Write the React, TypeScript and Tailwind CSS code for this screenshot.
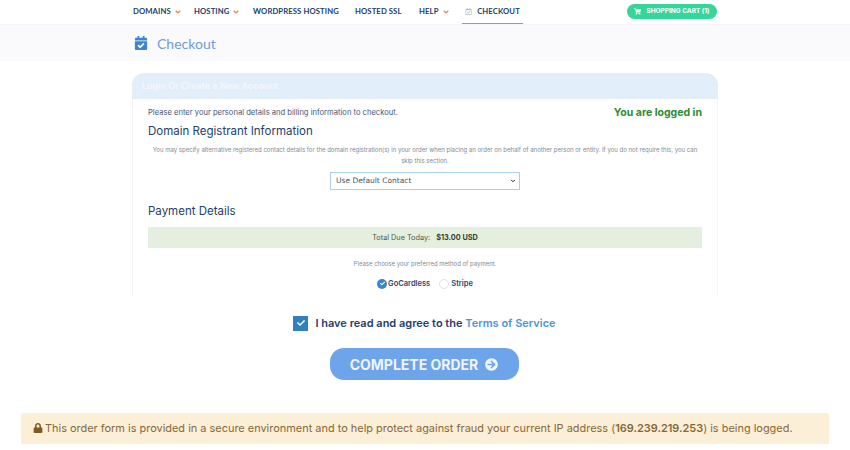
import { ChevronDown } from "lucide-react";
import { FaCalendarCheck, FaShoppingCart, FaLock, FaArrowCircleRight, FaCheck, FaRegCalendarCheck } from "react-icons/fa";

const Nav = ({ label, caret, w }: { label: string; caret?: boolean; w: string }) => (
  <div className={`flex items-center gap-[3px] text-[7.7px] font-bold tracking-[0.1px] text-[#22406b] ${w}`}>
    <span>{label}</span>
    {caret && <ChevronDown size={8} strokeWidth={3.5} className="text-[#e58b4a]" />}
  </div>
);

export default function App() {
  return (
    <div className="h-[450px] w-[850px] overflow-hidden bg-white font-['Inter',sans-serif] text-[#22406b]">
      <header className="flex h-[25px] pl-[133px] pr-[133px] border-b border-[#f5f5f7] font-['Lato',sans-serif]">
        <nav className="flex flex-1 items-center">
          <Nav label="DOMAINS" caret w="w-[61px]" />
          <Nav label="HOSTING" caret w="w-[59px]" />
          <Nav label="WORDPRESS HOSTING" w="w-[102px]" />
          <Nav label="HOSTED SSL" w="w-[64px]" />
          <Nav label="HELP" caret w="w-[43px]" />
          <div className="flex h-[24px] w-[61px] items-center justify-center gap-[5px] border-b border-[#7b9fd0] text-[7.7px] font-bold tracking-[0.1px]">
            <FaRegCalendarCheck size={7} className="text-[#b8bcc4]" />
            CHECKOUT
          </div>
        </nav>
        <div className="mt-[4px] flex h-[15px] w-[90px] items-center justify-center gap-[5px] rounded-full bg-[#35d69a] font-['Inter',sans-serif] text-[6.5px] font-bold text-white">
          <FaShoppingCart size={7} />
          SHOPPING CART (1)
        </div>
      </header>

      <div className="flex h-[36px] items-center gap-[9px] bg-[#fafafc] pl-[134px]">
        <FaCalendarCheck size={14} className="text-[#3f84cf]" />
        <span className="font-['Lato',sans-serif] text-[14px] text-[#6f9bdc]">Checkout</span>
      </div>

      <main className="mx-[132px] mt-[12px]">
        <div className="flex h-[26px] items-center rounded-t-[12px] bg-[#e3eefb] pl-[10px] text-[9px] font-semibold text-[#f2f7fd]">
          Login Or Create a New Account
        </div>
        <section className="h-[197px] border-x border-[#f4f4f6] px-[15px]">
          <div className="flex items-start justify-between pt-[6px]">
            <p className="text-[7.6px] leading-[16px] text-[#3f5878]">Please enter your personal details and billing information to checkout.</p>
            <p className="text-[10.5px] font-bold leading-[16px] text-[#2e8b2e]">You are logged in</p>
          </div>
          <h2 className="mt-[2px] text-[11.5px] leading-[16px] text-[#22406b]">Domain Registrant Information</h2>
          <p className="mt-[5px] text-center text-[6.03px] leading-[11px] text-[#808a98]">
            You may specify alternative registered contact details for the domain registration(s) in your order when placing an order on behalf of another person or entity. If you do not require this, you can skip this section.
          </p>
          <div className="mt-[6px] flex justify-center">
            <div className="flex h-[18px] w-[190px] items-center justify-between border border-[#a9cfe9] pl-[5px] pr-[3px] font-['DejaVu_Sans',sans-serif] text-[7.5px] text-[#4a5360]">
              Use Default Contact
              <ChevronDown size={6} strokeWidth={4} className="text-[#222]" />
            </div>
          </div>
          <h2 className="mt-[13px] text-[11.5px] leading-[16px] text-[#22406b]">Payment Details</h2>
          <div className="mt-[8px] flex h-[21px] items-center justify-center gap-[6px] bg-[#e5efdf] pt-[1px] text-[7.3px] text-[#4a5a4a]">
            <span>Total Due Today:</span>
            <span className="font-bold text-[#33452f]">$13.00 USD</span>
          </div>
          <p className="mt-[12px] text-center text-[6px] leading-[8px] text-[#808a98]">Please choose your preferred method of payment.</p>
          <div className="mt-[10px] flex items-center justify-center text-[7.5px] font-semibold text-[#2c4a72]">
            <span className="mr-[1px] flex h-[10px] w-[10px] items-center justify-center rounded-full bg-[#3b86c8] text-white">
              <FaCheck size={5} />
            </span>
            <span className="mr-[9px]">GoCardless</span>
            <span className="mr-[2px] h-[10px] w-[10px] rounded-full border border-[#e3e3e6]" />
            <span>Stripe</span>
          </div>
        </section>
      </main>

      <div className="mt-[19px] flex items-center justify-center gap-[7px] pr-[1px]">
        <span className="flex h-[15px] w-[15px] items-center justify-center bg-[#2f80c0] text-white">
          <FaCheck size={8} />
        </span>
        <span className="text-[11px] font-semibold text-[#22406b]">
          I have read and agree to the <span className="text-[#4f93da]">Terms of Service</span>
        </span>
      </div>

      <div className="mt-[16px] flex justify-center pr-[2px]">
        <div className="flex h-[32px] w-[189px] items-center justify-center gap-[7px] rounded-[14px] bg-[#6ea4ea] pt-[1px] text-[14px] font-bold text-[#eef5fd]">
          COMPLETE ORDER
          <FaArrowCircleRight size={13} />
        </div>
      </div>

      <div className="mx-[21px] mt-[33px] flex h-[31px] items-center gap-[2px] rounded-[2px] bg-[#fcefd8] pl-[12px] text-[10.95px] text-[#86683a]">
        <FaLock size={10} className="text-[#7d5a24]" />
        <span>
          This order form is provided in a secure environment and to help protect against fraud your current IP address (<b className="font-semibold">169.239.219.253</b>) is being logged.
        </span>
      </div>
    </div>
  );
}
